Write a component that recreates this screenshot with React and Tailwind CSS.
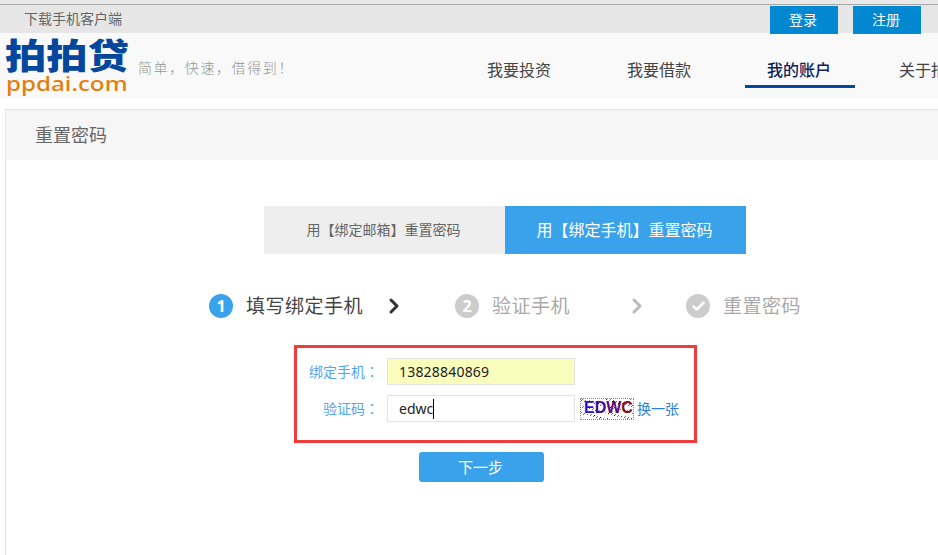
import { Check, ChevronRight } from 'lucide-react';

const cjk = { fontFamily: '"Noto Sans", "Noto Sans CJK SC", sans-serif' };

function Topbar() {
  return (
    <div className="relative h-[33px] border-t-[4px] border-[#e9e9e9] bg-[#e6e6e6]">
      <div className="flex h-[29px] items-start justify-between border-t border-[#a8a8a8] pl-[24px] pr-[17px]">
        <span className="mt-[4px] text-[14px] leading-[20px] text-[#666]">下载手机客户端</span>
        <div className="flex gap-[15px] pt-[1px]">
          <a className="flex h-[28px] w-[68px] items-center justify-center bg-[#0288d1] pb-[2px] pr-[2px] text-[14px] text-white">登录</a>
          <a className="flex h-[28px] w-[68px] items-center justify-center bg-[#0288d1] pb-[2px] pr-[2px] text-[14px] text-white">注册</a>
        </div>
      </div>
    </div>
  );
}

function Logo() {
  return (
    <div className="flex w-[450px] shrink-0 items-start pl-[5px] pt-[6px]">
      <div className="w-[125px] shrink-0">
        <div className="h-[34px] origin-left scale-x-[1.18] whitespace-nowrap text-[35px] font-black leading-[34px] text-[#04479c]">拍拍贷</div>
        <div className="ml-[1px] h-[22px] origin-left scale-x-[1.21] whitespace-nowrap text-[20px] font-medium leading-[22px] text-[#e67e0a]">ppdai.com</div>
      </div>
      <div className="ml-[8px] mt-[19px] whitespace-nowrap text-[14px] font-light leading-[20px] tracking-[1.6px] text-[#959595]">简单，快速，借得到！</div>
    </div>
  );
}

function Nav() {
  const items = ['我要投资', '我要借款', '我的账户', '关于拍拍贷'];
  return (
    <nav className="flex">
      {items.map((item, i) => (
        <div key={item} className="flex w-[140px] shrink-0 justify-center">
          <a
            className={`h-[55px] w-[110px] shrink-0 whitespace-nowrap pr-[2px] pt-[25px] text-center text-[16px] leading-[24px] ${i === 2 ? 'border-b-[3px] border-[#04479c] font-medium text-[#0a1f5c]' : 'text-[#444]'}`}
          >
            {item}
          </a>
        </div>
      ))}
    </nav>
  );
}

function Tabs() {
  return (
    <div className="ml-[258px] flex">
      <div className="flex h-[48px] w-[241px] items-center justify-center bg-[#eee] pb-[2px] pr-[2px] text-[14px] text-[#666]">用【绑定邮箱】重置密码</div>
      <div className="flex h-[48px] w-[241px] items-center justify-center bg-[#3aa2eb] pr-[2px] text-[16px] text-white">用【绑定手机】重置密码</div>
    </div>
  );
}

function Step({ icon, label, active }) {
  return (
    <div className="flex items-center gap-[13px]">
      <span className={`flex h-[24px] w-[24px] items-center justify-center rounded-full text-[16px] font-bold leading-none text-white ${active ? 'bg-[#3aa2eb]' : 'bg-[#ccc]'}`}>
        {icon}
      </span>
      <span className={`whitespace-nowrap text-[19px] tracking-[0.5px] ${active ? 'text-[#444]' : 'text-[#aaa]'}`}>{label}</span>
    </div>
  );
}

function Steps() {
  return (
    <div className="mt-[40px] flex h-[24px] items-center pl-[203px]">
      <Step icon="1" label="填写绑定手机" active />
      <ChevronRight className="ml-[19px] mr-[49px] h-[24px] w-[24px] text-[#333]" strokeWidth={3} />
      <Step icon="2" label="验证手机" />
      <ChevronRight className="ml-[55px] mr-[37px] h-[24px] w-[24px] text-[#bbb]" strokeWidth={3} />
      <Step icon={<Check className="h-[15px] w-[15px]" strokeWidth={4} />} label="重置密码" />
    </div>
  );
}

function Captcha() {
  const colors = ['#c026d3', '#16a34a', '#111', '#2563eb', '#dc2626', '#ca8a04'];
  const dots = Array.from({ length: 90 }, (_, i) => [(i * 17 + 3) % 52, (i * 11 + 2) % 20]);
  return (
    <div className="ml-[5px] h-[22px] w-[54px] shrink-0 border border-dotted border-[#888] bg-white">
      <svg width="52" height="20" viewBox="0 0 52 20">
        {dots.map(([x, y], i) => (
          <rect key={i} x={x} y={y} width="1" height="1" fill={colors[i % 6]} />
        ))}
        <text y="14" fontFamily="Liberation Sans, sans-serif" fontWeight="700" fontSize="16">
          <tspan x="3" fill="#2a10d0">E</tspan>
          <tspan fill="#3b0a9c">D</tspan>
          <tspan fill="#5b0a78">W</tspan>
          <tspan fill="#8a0a20">C</tspan>
        </text>
      </svg>
    </div>
  );
}

function FieldLabel({ text }) {
  return (
    <label className="w-[82px] shrink-0 whitespace-nowrap text-right text-[14px] text-[#55a5ec]">
      {text}<span className="font-['Noto_Sans_CJK_TC']">：</span>
    </label>
  );
}

function FormBox() {
  return (
    <div className="ml-[288px] mt-[27px] flex h-[98px] w-[403px] flex-col gap-[10px] border-[3px] border-[#f23c3c] pt-[10px]">
      <div className="flex items-center">
        <FieldLabel text="绑定手机" />
        <div className="ml-[8px] flex h-[27px] w-[188px] items-center border border-[#e3e3e3] bg-[#fbfdbd] pl-[11px] text-[14px] tracking-[0.2px] text-[#222]">13828840869</div>
      </div>
      <div className="flex items-center">
        <FieldLabel text="验证码" />
        <div className="ml-[8px] flex h-[27px] w-[188px] items-center border border-[#e3e3e3] bg-white pl-[11px] text-[14px] text-[#222]">
          edwc<span className="h-[20px] w-px bg-black" />
        </div>
        <Captcha />
        <a className="ml-[3px] whitespace-nowrap text-[14px] text-[#2d7fd8]">换一张</a>
      </div>
    </div>
  );
}

export default function App() {
  return (
    <div className="h-[555px] w-[938px] overflow-hidden bg-white" style={cjk}>
      <Topbar />
      <header className="flex h-[66px] bg-[#f9f9f9]">
        <Logo />
        <Nav />
      </header>
      <main className="ml-[5px] mt-[10px] h-[446px] border-l border-t border-[#e5e5e5]">
        <div className="flex h-[50px] items-center bg-[#f6f6f6] pl-[29px] pt-[1px] text-[18px] text-[#666]">重置密码</div>
        <div className="pt-[46px]">
          <Tabs />
          <Steps />
          <FormBox />
          <div className="ml-[413px] mt-[9px] flex h-[30px] w-[125px] items-center justify-center rounded-[3px] bg-[#3aa2eb] pr-[2px] text-[15px] text-white">下一步</div>
        </div>
      </main>
    </div>
  );
}
